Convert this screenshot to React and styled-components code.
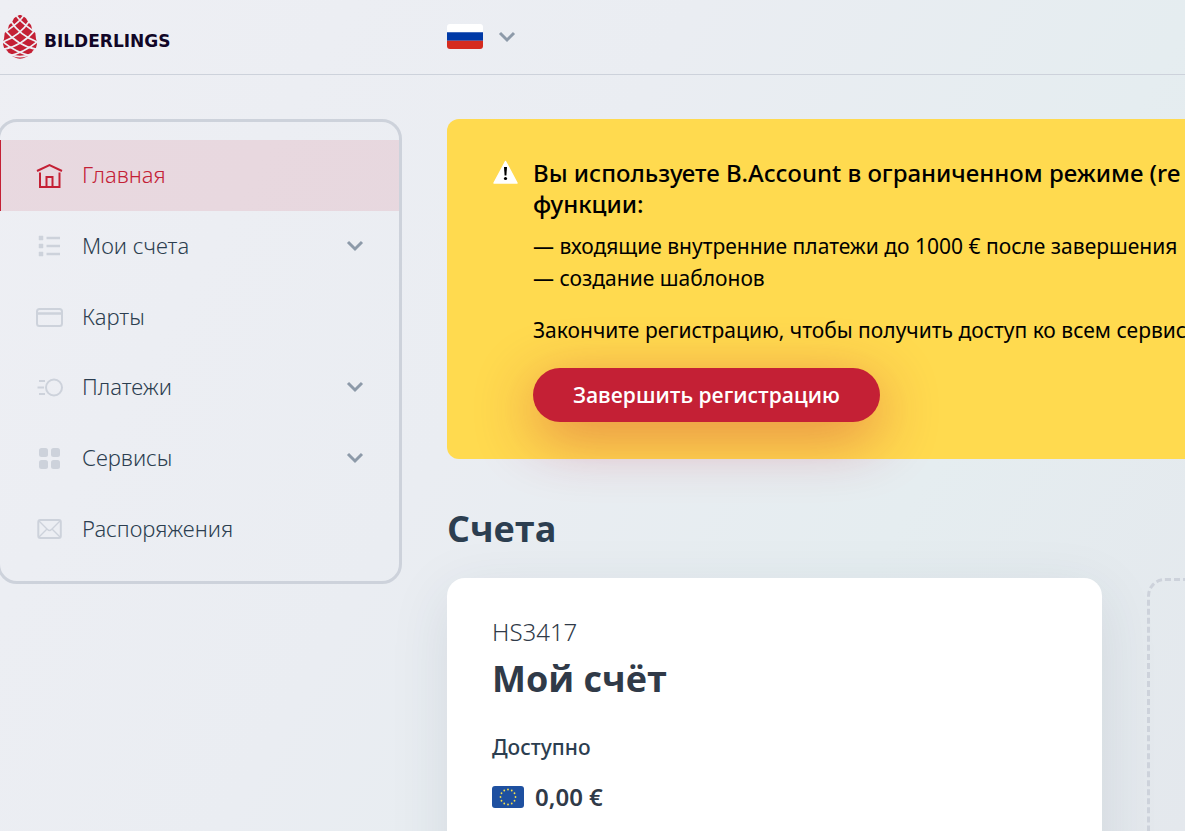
import React from 'react';
import styled, { createGlobalStyle } from 'styled-components';

const GlobalStyle = createGlobalStyle`
  * { box-sizing: border-box; }
  html { height: 100%; }
  body {
    margin: 0;
    min-height: 100%;
    overflow: hidden;
    font-family: 'Noto Sans', 'Open Sans', sans-serif;
    color: #2c3e50;
    background: linear-gradient(120deg, #eeeff4 0%, #eaedf2 42%, #e5edf0 72%, #e4e8ed 100%);
  }
  h1, h2, h3, p, ul { margin: 0; padding: 0; }
`;

const Page = styled.div`
  height: 100vh;
  overflow: hidden;
`;

const Header = styled.header`
  display: grid;
  grid-template-columns: 402px 1fr;
  column-gap: 45px;
  align-items: center;
  height: 75px;
  border-bottom: 1px solid #cdd2db;
`;

const Logo = styled.a`
  display: flex;
  align-items: center;
  gap: 7px;
  padding-left: 3px;
  color: #110627;
  font-family: 'DejaVu Sans', sans-serif;
  font-size: 17px;
  font-weight: 700;
  line-height: 24px;
  text-decoration: none;

  span { padding-top: 8px; }
`;

const Language = styled.button`
  display: flex;
  align-items: center;
  gap: 15px;
  width: max-content;
  padding: 0 0 1px;
  border: 0;
  background: none;
  cursor: pointer;
`;

const Layout = styled.div`
  display: grid;
  grid-template-columns: 402px minmax(1000px, 1fr);
  column-gap: 45px;
  align-items: start;
  padding-top: 44px;
`;

const Sidebar = styled.nav`
  margin-left: -3px;
  padding: 18px 0 17px;
  border: 3px solid #cdd2db;
  border-radius: 20px;
`;

const NavList = styled.ul`
  display: grid;
  grid-auto-rows: 1fr;
  min-height: 424px;
  list-style: none;
`;

const NavLink = styled.a`
  display: flex;
  align-items: center;
  height: 100%;
  padding: 0 35px 0 35px;
  border-left: 1px solid ${({ $active }) => ($active ? '#c42035' : 'transparent')};
  background: ${({ $active }) => ($active ? 'rgba(196, 32, 53, 0.1)' : 'transparent')};
  color: ${({ $active }) => ($active ? '#c42035' : '#2c3e50')};
  font-size: 22px;
  font-weight: 300;
  line-height: 28px;
  text-decoration: none;

  span {
    flex: 1;
    margin-left: 18px;
    padding-bottom: 2px;
  }
`;

const Main = styled.main`
  min-width: 0;
`;

const Banner = styled.section`
  display: flex;
  gap: 14px;
  padding: 38px 45px 37px;
  border-radius: 12px;
  background: #ffda4f;
  color: #000;
  white-space: nowrap;
`;

const BannerTitle = styled.h2`
  font-size: 24px;
  font-weight: 500;
  line-height: 31px;
`;

const BannerText = styled.p`
  margin-top: ${({ $gap }) => $gap}px;
  font-size: 21px;
  font-weight: 400;
  line-height: 32px;
`;

const PrimaryButton = styled.button`
  position: relative;
  height: 54px;
  margin-top: 22px;
  padding: 0 40px;
  border: 0;
  border-radius: 27px;
  background: #c42035;
  box-shadow: 0 15px 60px rgba(196, 32, 53, 0.45);
  color: #fff;
  font-family: 'Open Sans', sans-serif;
  font-size: 21px;
  font-weight: 600;
  cursor: pointer;
`;

const SectionTitle = styled.h1`
  margin: 45px 0 24px;
  font-family: 'Open Sans', sans-serif;
  font-size: 36px;
  font-weight: 700;
  line-height: 50px;
`;

const Accounts = styled.div`
  display: grid;
  grid-template-columns: 655px 1fr;
  column-gap: 45px;
`;

const AccountCard = styled.article`
  min-height: 360px;
  padding: 38px 45px;
  border-radius: 18px;
  background: #fff;
  box-shadow: 0 15px 60px rgba(44, 62, 80, 0.1);
  color: #303a48;
`;

const AccountNumber = styled.p`
  font-size: 24px;
  font-weight: 300;
  line-height: 32px;
`;

const AccountName = styled.h3`
  margin-top: 6px;
  font-family: 'Open Sans', sans-serif;
  font-size: 36px;
  font-weight: 700;
  line-height: 50px;
`;

const AccountLabel = styled.p`
  margin-top: 29px;
  color: #2c3e50;
  font-size: 21px;
  font-weight: 500;
  line-height: 28px;
`;

const Balance = styled.p`
  display: flex;
  align-items: center;
  gap: 11px;
  margin-top: 20px;
  font-size: 24px;
  font-weight: 600;
  line-height: 32px;
`;

const AddAccount = styled.div`
  border: 3px dashed #cdd2db;
  border-radius: 18px;
`;

const Cone = () => (
  <svg width="34" height="44" viewBox="9 44 102 132" aria-hidden="true">
    <path
      fill="#c42035"
      d="M60 43 L70 48 L78 54 L85 66 L93 74 L97 89 L106 98 L108 116 L112 127 L108 142 L98 152 L92 163 L78 170 Q60 180 42 170 L29 163 L22 152 L12 142 L8 127 L12 116 L14 98 L23 89 L27 74 L36 66 L42 54 L50 48 Z"
    />
    <g fill="none" stroke="#eeeff4" strokeWidth="5">
      <path d="M46 42 Q60 64 100 92M74 42 Q60 64 20 92" />
      <path d="M32 62 Q60 106 114 126M88 62 Q60 106 6 126" />
      <path d="M14 88 Q54 138 116 148M106 88 Q66 138 4 148" />
      <path d="M8 124 Q46 156 96 168M112 124 Q74 156 24 168" />
      <path d="M20 158 Q60 180 100 158" />
    </g>
  </svg>
);

const RussianFlag = () => (
  <svg width="36" height="25" viewBox="0 0 36 25" role="img" aria-label="Русский">
    <clipPath id="ru"><rect width="36" height="25" rx="3" /></clipPath>
    <g clipPath="url(#ru)">
      <path fill="#fff" d="M0 0h36v9H0z" />
      <path fill="#0039a6" d="M0 8.3h36v8.4H0z" />
      <path fill="#d52b1e" d="M0 16.7h36V25H0z" />
    </g>
  </svg>
);

const EuFlag = () => (
  <svg width="32" height="22" viewBox="0 0 32 22" aria-hidden="true">
    <rect width="32" height="22" rx="3" fill="#1e50a0" />
    {Array.from({ length: 12 }, (_, i) => {
      const a = (i * Math.PI) / 6;
      return <circle key={i} cx={16 + 7.5 * Math.sin(a)} cy={11 - 7.5 * Math.cos(a)} r="0.9" fill="#f5e04d" />;
    })}
  </svg>
);

const Chevron = () => (
  <svg width="18" height="12" viewBox="0 0 18 12" fill="none" aria-hidden="true">
    <path d="M2 2l7 7 7-7" stroke="#8d9aa9" strokeWidth="3" />
  </svg>
);

const Warning = () => (
  <svg width="27" height="28" viewBox="0 0 27 28" aria-hidden="true">
    <path d="M13.5 4.5L25 26H2z" fill="#fff" stroke="#fff" strokeWidth="1.5" strokeLinejoin="round" />
    <path d="M12 10h3l-.6 8.5h-1.8z" fill="#000" />
    <circle cx="13.5" cy="21.5" r="1.6" fill="#000" />
  </svg>
);

const NavIcon = ({ children }) => (
  <svg width="28" height="28" viewBox="0 0 28 28" fill="none" stroke="currentColor" strokeWidth="2" aria-hidden="true">
    {children}
  </svg>
);

const icons = {
  home: (
    <NavIcon>
      <path d="M1 10L13.5 4 26 10" />
      <path d="M4 11.5V26h19.5V11.5M10.5 25.5V16h6v9.5" />
    </NavIcon>
  ),
  list: (
    <NavIcon>
      <g stroke="#cdd2db" strokeWidth="2.5">
        <path d="M10.5 6H24M10.5 14H24M10.5 22H24" />
      </g>
      <path d="M3 4h4v4H3zM3 12h4v4H3zM3 20h4v4H3z" fill="#cdd2db" stroke="#cdd2db" strokeWidth=".5" />
    </NavIcon>
  ),
  card: (
    <NavIcon>
      <rect x="1" y="6" width="25" height="17" rx="2.5" stroke="#cdd2db" />
      <path d="M1 10.5h25" stroke="#cdd2db" strokeWidth="2.5" />
    </NavIcon>
  ),
  payments: (
    <NavIcon>
      <circle cx="18" cy="14.5" r="8" stroke="#cdd2db" />
      <path d="M3 8h6M1.5 14.5H8M3 21h6" stroke="#cdd2db" />
    </NavIcon>
  ),
  services: (
    <NavIcon>
      <g fill="#cdd2db" stroke="none">
        <rect x="3" y="4" width="9" height="9" rx="2.5" />
        <rect x="15" y="4" width="9" height="9" rx="2.5" />
        <rect x="3" y="16" width="9" height="9" rx="2.5" />
        <rect x="15" y="16" width="9" height="9" rx="2.5" />
      </g>
    </NavIcon>
  ),
  mail: (
    <NavIcon>
      <g stroke="#cdd2db">
        <rect x="2.3" y="5" width="22.5" height="18" rx="2" />
        <path d="M3 6l8.5 8.5q2 2 4 0L24 6M3 22l8-8M24 22l-8-8" strokeWidth="1.4" />
      </g>
    </NavIcon>
  ),
};

const navItems = [
  { label: 'Главная', icon: 'home', active: true },
  { label: 'Мои счета', icon: 'list', expandable: true },
  { label: 'Карты', icon: 'card' },
  { label: 'Платежи', icon: 'payments', expandable: true },
  { label: 'Сервисы', icon: 'services', expandable: true },
  { label: 'Распоряжения', icon: 'mail' },
];

const App = () => {
  return (
    <Page>
      <GlobalStyle />
      <Header>
        <Logo href="#">
          <Cone />
          <span>BILDERLINGS</span>
        </Logo>
        <Language type="button">
          <RussianFlag />
          <Chevron />
        </Language>
      </Header>
      <Layout>
        <Sidebar>
          <NavList>
            {navItems.map(({ label, icon, active, expandable }) => (
              <li key={label}>
                <NavLink href="#" $active={active}>
                  {icons[icon]}
                  <span>{label}</span>
                  {expandable && <Chevron />}
                </NavLink>
              </li>
            ))}
          </NavList>
        </Sidebar>
        <Main>
          <Banner>
            <Warning />
            <div>
              <BannerTitle>
                Вы используете B.Account в ограниченном режиме (re
                <br />
                функции:
              </BannerTitle>
              <BannerText $gap={11}>
                — входящие внутренние платежи до 1000 € после завершения
                <br />
                — создание шаблонов
              </BannerText>
              <BannerText $gap={20}>Закончите регистрацию, чтобы получить доступ ко всем сервис</BannerText>
              <PrimaryButton type="button">Завершить регистрацию</PrimaryButton>
            </div>
          </Banner>
          <SectionTitle>Счета</SectionTitle>
          <Accounts>
            <AccountCard>
              <AccountNumber>HS3417</AccountNumber>
              <AccountName>Мой счёт</AccountName>
              <AccountLabel>Доступно</AccountLabel>
              <Balance>
                <EuFlag />
                0,00 €
              </Balance>
            </AccountCard>
            <AddAccount />
          </Accounts>
        </Main>
      </Layout>
    </Page>
  );
};

export default App;
